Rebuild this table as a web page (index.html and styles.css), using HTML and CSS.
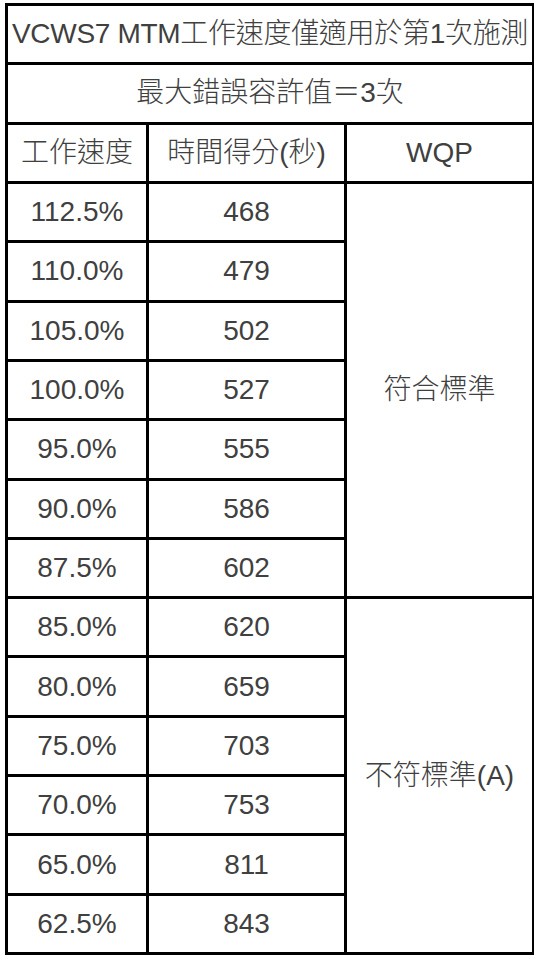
FILE: index.html
```html
<!DOCTYPE html>
<html lang="zh-Hant">
<head>
<meta charset="utf-8">
<link rel="stylesheet" href="styles.css">
</head>
<body>
<table class="grid">
  <colgroup>
    <col class="c1"><col class="c2"><col class="c3">
  </colgroup>
  <tbody>
    <tr><td colspan="3" class="title">VCWS7 MTM工作速度僅適用於第1次施測</td></tr>
    <tr><td colspan="3">最大錯誤容許值＝3次</td></tr>
    <tr><td>工作速度</td><td>時間得分(秒)</td><td>WQP</td></tr>
    <tr><td>112.5%</td><td>468</td><td rowspan="7">符合標準</td></tr>
    <tr><td>110.0%</td><td>479</td></tr>
    <tr><td>105.0%</td><td>502</td></tr>
    <tr><td>100.0%</td><td>527</td></tr>
    <tr><td>95.0%</td><td>555</td></tr>
    <tr><td>90.0%</td><td>586</td></tr>
    <tr><td>87.5%</td><td>602</td></tr>
    <tr><td>85.0%</td><td>620</td><td rowspan="6">不符標準(A)</td></tr>
    <tr><td>80.0%</td><td>659</td></tr>
    <tr><td>75.0%</td><td>703</td></tr>
    <tr><td>70.0%</td><td>753</td></tr>
    <tr><td>65.0%</td><td>811</td></tr>
    <tr><td>62.5%</td><td>843</td></tr>
  </tbody>
</table>
</body>
</html>
```

FILE: styles.css
```css
html, body {
  margin: 0;
  padding: 0;
  background: #ffffff;
}

body {
  padding: 3px 0 0 5px;
}

.grid {
  border-collapse: collapse;
  table-layout: fixed;
  width: 527px;
  height: 952px;
  font-family: "Liberation Sans", Arial, "Noto Sans CJK TC", sans-serif;
  font-size: 28px;
  font-weight: 300;
  color: #404040;
}

.grid .c1 { width: 141px; }
.grid .c2 { width: 198px; }
.grid .c3 { width: 188px; }

.grid td {
  border: 3px solid #000;
  padding: 0;
  text-align: center;
  vertical-align: middle;
  white-space: nowrap;
  line-height: 1;
}

.grid .title {
  letter-spacing: -0.3px;
}
```
